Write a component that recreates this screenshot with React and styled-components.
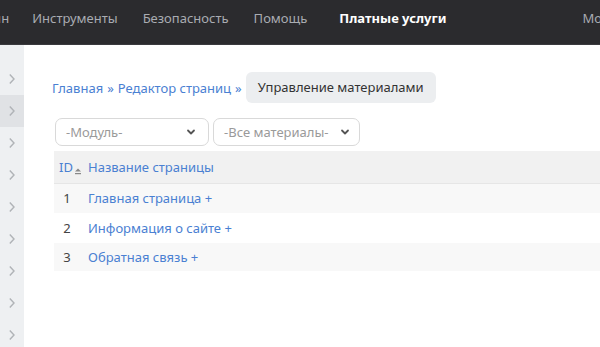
import React from "react";
import styled, { createGlobalStyle } from "styled-components";

const Global = createGlobalStyle`
  html, body { margin: 0; padding: 0; background: #fff; overflow: hidden; }
  body { font-family: "Noto Sans", "Open Sans", sans-serif; }
`;

const Page = styled.div`
  width: 600px;
  height: 347px;
  display: flex;
  flex-direction: column;
  overflow: hidden;
`;

const TopBar = styled.header`
  height: 45px;
  flex: 0 0 45px;
  background: #2b2b2e;
  border-bottom: 1px solid #3a3a3e;
  display: flex;
  align-items: center;
  white-space: nowrap;
  overflow: hidden;
  padding-bottom: 9px;
  box-sizing: border-box;
`;

const NavItem = styled.a`
  font-size: 13px;
  color: ${(p) => (p.$active ? "#ffffff" : "#a9acb2")};
  font-weight: ${(p) => (p.$active ? 700 : 400)};
  margin-left: ${(p) => p.$ml || 0}px;
  text-decoration: none;
  flex: 0 0 auto;
`;

const Body = styled.div`
  flex: 1;
  display: flex;
  min-height: 0;
`;

const Sidebar = styled.nav`
  width: 24px;
  flex: 0 0 24px;
  background: #eef0f2;
  padding-top: 18px;
  display: flex;
  flex-direction: column;
`;

const SideItem = styled.div`
  height: 32px;
  flex: 0 0 32px;
  display: flex;
  align-items: center;
  justify-content: center;
  background: ${(p) => (p.$active ? "#e0e2e5" : "transparent")};
`;

const Main = styled.main`
  flex: 1;
  padding: 27px 0 0 30px;
  min-width: 0;
`;

const Crumbs = styled.div`
  display: flex;
  align-items: center;
  font-size: 13px;
  color: #4a80d2;
  white-space: nowrap;
  margin-left: -2px;
`;

const Crumb = styled.a`
  color: #4a80d2;
  text-decoration: none;
`;

const Sep = styled.span`
  margin: 0 4px;
  color: #4a80d2;
`;

const Current = styled.span`
  background: #eceef0;
  color: #333;
  padding: 0 12px;
  height: 31px;
  line-height: 31px;
  border-radius: 6px;
  margin-left: 0;
`;

const Filters = styled.div`
  display: flex;
  gap: 4px;
  margin-top: 15px;
  margin-left: 1px;
`;

const Select = styled.div`
  width: ${(p) => p.$w}px;
  height: 28px;
  box-sizing: border-box;
  border: 1px solid #d9d9d9;
  border-radius: 7px;
  display: flex;
  align-items: center;
  justify-content: space-between;
  padding: 0 ${(p) => p.$pr}px 0 10px;
  font-size: 13px;
  color: #9a9a9a;
  white-space: nowrap;
  background: #fff;
`;

const Table = styled.table`
  border-collapse: collapse;
  table-layout: fixed;
  width: 560px;
  margin-top: 5px;
  font-size: 13px;
`;

const HeadRow = styled.tr`
  background: #f1f1f1;
  border-bottom: 1px solid #e6e6e6;
  height: 32px;
`;

const Row = styled.tr`
  background: ${(p) => (p.$alt ? "#f8f8f8" : "#fff")};
  height: ${(p) => p.$h}px;
`;

const Th = styled.th`
  box-sizing: border-box;
  text-align: left;
  font-weight: 400;
  color: #4a80d2;
  padding: 0 0 0 ${(p) => p.$pl || 0}px;
  width: ${(p) => (p.$w ? p.$w + "px" : "auto")};
  white-space: nowrap;
`;

const IdCell = styled.td`
  text-align: center;
  color: #444;
  padding: 0 8px 0 0;
`;

const NameCell = styled.td`
  color: #4a80d2;
  padding: 0;
  white-space: nowrap;
`;

const SortMark = styled.svg`
  margin-left: 1px;
  vertical-align: -3px;
`;

const Chevron = ({ size = 10, color = "#555" }) => (
  <svg width={size} height={size} viewBox="0 0 10 10">
    <path d="M2 3.5 L5 6.5 L8 3.5" fill="none" stroke={color} strokeWidth="1.8" strokeLinecap="round" strokeLinejoin="round" />
  </svg>
);

const RightChevron = () => (
  <svg width="8" height="12" viewBox="0 0 8 12">
    <path d="M1.8 1.5 L6 6 L1.8 10.5" fill="none" stroke="#b0b3b7" strokeWidth="1.4" />
  </svg>
);

const rows = [
  { id: 1, name: "Главная страница +", h: 30 },
  { id: 2, name: "Информация о сайте +", h: 30 },
  { id: 3, name: "Обратная связь +", h: 28 },
];

export default function App() {
  return (
    <Page>
      <Global />
      <TopBar>
        <NavItem $ml={-38}>Дизайн</NavItem>
        <NavItem $ml={23}>Инструменты</NavItem>
        <NavItem $ml={25}>Безопасность</NavItem>
        <NavItem $ml={25}>Помощь</NavItem>
        <NavItem $ml={32} $active>Платные услуги</NavItem>
        <NavItem $ml={136}>Модули</NavItem>
      </TopBar>
      <Body>
        <Sidebar>
          {Array.from({ length: 9 }).map((_, i) => (
            <SideItem key={i} $active={i === 1}>
              <RightChevron />
            </SideItem>
          ))}
        </Sidebar>
        <Main>
          <Crumbs>
            <Crumb>Главная</Crumb>
            <Sep>»</Sep>
            <Crumb>Редактор страниц</Crumb>
            <Sep>»</Sep>
            <Current>Управление материалами</Current>
          </Crumbs>
          <Filters>
            <Select $w={154} $pr={12}>
              -Модуль-
              <Chevron />
            </Select>
            <Select $w={147} $pr={9}>
              -Все материалы-
              <Chevron />
            </Select>
          </Filters>
          <Table>
            <thead>
              <HeadRow>
                <Th $w={34} $pl={5}>
                  ID
                  <SortMark width="8" height="8" viewBox="0 0 8 8">
                    <path d="M1 4.5 L4 1.5 L7 4.5 Z" fill="#888" />
                    <rect x="1" y="6" width="6" height="1.2" fill="#888" />
                  </SortMark>
                </Th>
                <Th>Название страницы</Th>
              </HeadRow>
            </thead>
            <tbody>
              {rows.map((r, i) => (
                <Row key={r.id} $alt={i % 2 === 0} $h={r.h}>
                  <IdCell>{r.id}</IdCell>
                  <NameCell>{r.name}</NameCell>
                </Row>
              ))}
            </tbody>
          </Table>
        </Main>
      </Body>
    </Page>
  );
}
